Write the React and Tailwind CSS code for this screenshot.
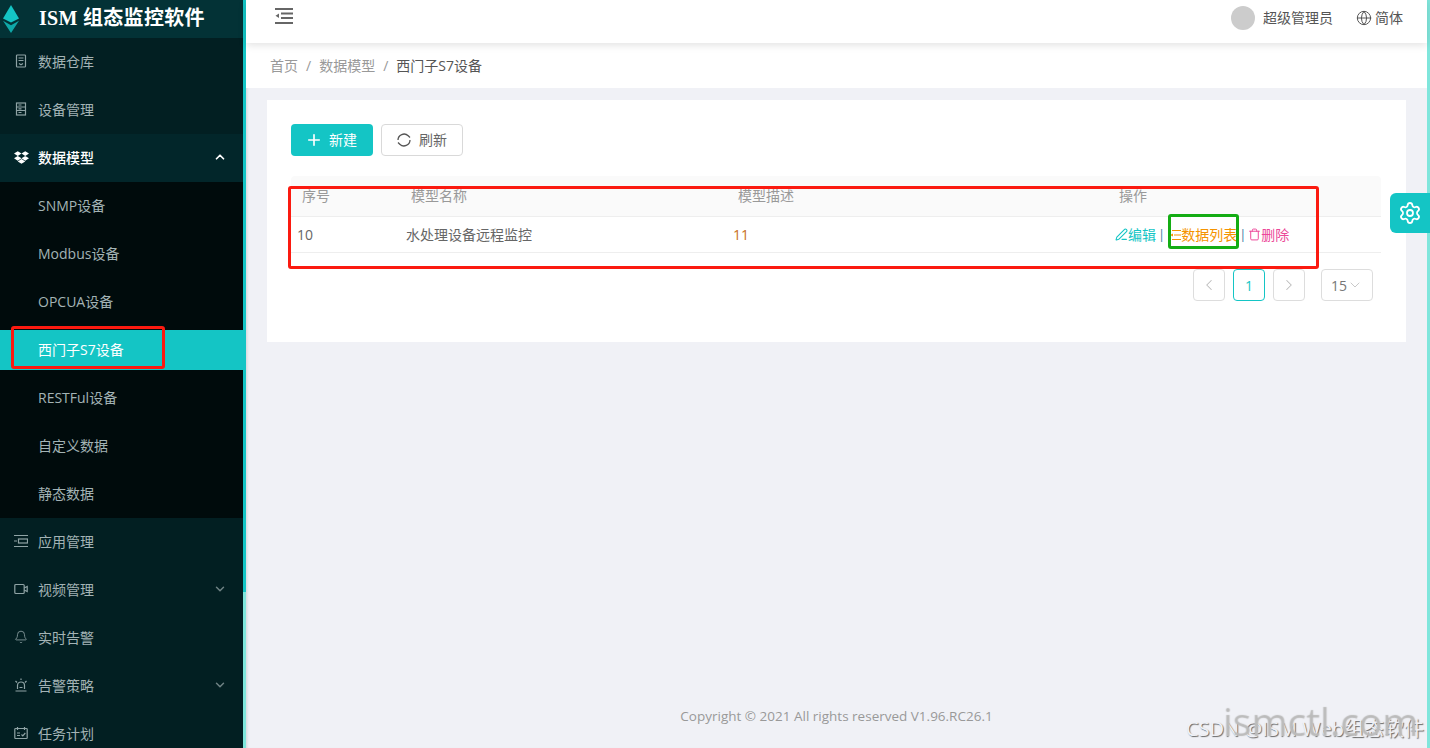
import { Plus, Settings, Globe, PenLine, Trash, ChevronUp, ChevronDown, ChevronLeft, ChevronRight, Bell } from 'lucide-react'
import { FaDropbox } from 'react-icons/fa'

const fontStack = '[font-family:"Open_Sans","Noto_Sans_CJK_SC",sans-serif]'

function IconBox({ children }) {
  return (
    <svg width="14" height="14" viewBox="0 0 14 14" fill="none" stroke="currentColor" strokeWidth="1.2">
      {children}
    </svg>
  )
}

const WarehouseIcon = () => (
  <IconBox>
    <rect x="2.5" y="1" width="9" height="12" rx="0.8" />
    <path d="M4.5 4h5M4.5 6.5h5M5 9.5l2 1.2 2-1.2" />
  </IconBox>
)
const DeviceIcon = () => (
  <IconBox>
    <rect x="2.5" y="1" width="9" height="12" />
    <path d="M2.5 5h9M2.5 8.5h9M4.5 3h3M4.5 6.8h3M4.5 10.5h3" />
  </IconBox>
)
const AppIcon = () => (
  <IconBox>
    <path d="M0 1.500h14M0 12.500h14M0 7h3" />
    <rect x="4.500" y="5" width="9" height="4" />
  </IconBox>
)
const VideoIcon = () => (
  <IconBox>
    <rect x="0.8" y="2.5" width="9.4" height="9" rx="1" />
    <path d="M10.2 6l3-1.5v5l-3-1.5" />
  </IconBox>
)
const AlarmIcon = () => (
  <IconBox>
    <path d="M3.5 11V7.5a3.5 3.5 0 0 1 7 0V11M1.5 13h11M1.5 3l1.5 1.5M12.5 3L11 4.500M7 0.500v1.500M5.500 9.500h3" />
  </IconBox>
)
const PlanIcon = () => (
  <IconBox>
    <rect x="0.8" y="2.5" width="12.4" height="10" rx="0.8" />
    <path d="M3.500 1v3M10.500 1v3M3 7h3M3 9.500h3M7.500 8.500l1.300 1.300 2.500-2.800" />
  </IconBox>
)
const bellIcon = <Bell size={14} strokeWidth={1.4} />

const topItems = [
  { label: '数据仓库', icon: <WarehouseIcon /> },
  { label: '设备管理', icon: <DeviceIcon /> },
]
const subItems = ['SNMP设备', 'Modbus设备', 'OPCUA设备', '西门子S7设备', 'RESTFul设备', '自定义数据', '静态数据']
const bottomItems = [
  { label: '应用管理', icon: <AppIcon /> },
  { label: '视频管理', icon: <VideoIcon />, arrow: true },
  { label: '实时告警', icon: bellIcon },
  { label: '告警策略', icon: <AlarmIcon />, arrow: true },
  { label: '任务计划', icon: <PlanIcon /> },
]

function MenuItem({ item }) {
  return (
    <div className="flex h-12 shrink-0 items-center pb-[2px] pl-[14px] pr-[16px] text-[14px] text-[#a3b3b5]">
      <span className="flex w-6 text-[#8fa3a5]">{item.icon}</span>
      <span className="flex-1">{item.label}</span>
      {item.arrow && <ChevronDown size={14} strokeWidth={2.5} className="text-[#6f8385]" />}
    </div>
  )
}

function Sidebar() {
  return (
    <aside className="flex h-full w-[243px] shrink-0 flex-col overflow-hidden bg-[#021f22]">
      <div className="flex h-[38px] shrink-0 items-center bg-[#033236] pl-[3px]">
        <svg width="16" height="28" viewBox="0 0 17 32" preserveAspectRatio="none">
          <polygon points="8.500,0 0,15.500 8.500,20 17,15.500" fill="#14c5c5" />
          <polygon points="0,18 8.500,23 17,18 8.500,32" fill="#0fa8a8" />
        </svg>
        <span className="mb-[2px] ml-[20px] text-[20px] font-bold tracking-[0.3px] text-white [font-family:'Liberation_Serif','Noto_Sans_CJK_SC',serif]">
          ISM 组态监控软件
        </span>
      </div>
      {topItems.map((item) => (
        <MenuItem key={item.label} item={item} />
      ))}
      <div className="flex h-12 shrink-0 items-center bg-[#02262a] pb-[2px] pl-[14px] pr-[16px] text-[14px] font-medium text-white">
        <FaDropbox size={15} className="mr-[9px]" />
        <span className="flex-1">数据模型</span>
        <ChevronUp size={14} strokeWidth={3} />
      </div>
      <div className="flex h-[336px] shrink-0 flex-col gap-2 bg-[#000b0c] pt-1">
        {subItems.map((name) => (
          <div
            key={name}
            className={`flex h-10 shrink-0 items-center pb-[2px] pl-[38px] text-[14px] ${name === '西门子S7设备' ? 'bg-[#14c5c5] text-white' : 'text-[#a3b3b5]'}`}
          >
            {name}
          </div>
        ))}
      </div>
      {bottomItems.map((item) => (
        <MenuItem key={item.label} item={item} />
      ))}
    </aside>
  )
}

function Scrollbar() {
  return (
    <div className="flex h-full w-[3px] shrink-0 flex-col bg-[#80e6dc]">
      <div className="h-[592px] bg-[#14c5c5]" />
    </div>
  )
}

function RightEdge() {
  return <div className="h-full w-[3px] shrink-0 bg-[#80e6dc]" />
}

function TopBar() {
  return (
    <header className="relative z-10 flex h-[43px] shrink-0 items-center justify-between bg-white pb-[7px] pl-[29px] pr-[24px] shadow-[0_2px_8px_rgba(0,0,0,0.12)]">
      <svg width="18" height="16" viewBox="0 0 18 16" fill="none" stroke="#666" strokeWidth="1.800" className="mb-[4px]">
        <path d="M0 1h18M6 5.500h12M6 10h12M0 15h18" />
        <polygon points="0.500,7.800 4,5.500 4,10" fill="#666" stroke="none" />
      </svg>
      <div className="flex items-center text-[14px] text-[#555]">
        <span className="h-6 w-6 rounded-full bg-[#cccccc]" />
        <span className="mb-[2px] ml-2">超级管理员</span>
        <Globe size={16} strokeWidth={1.500} className="ml-[23px]" />
        <span className="mb-[2px] ml-[3px]">简体</span>
      </div>
    </header>
  )
}

function Breadcrumb() {
  return (
    <div className="flex h-[45px] shrink-0 items-center bg-white pl-[24px] text-[14px] text-[#999]">
      <span>首页</span>
      <span className="mx-2">/</span>
      <span>数据模型</span>
      <span className="mx-2">/</span>
      <span className="text-[#555]">西门子S7设备</span>
    </div>
  )
}

function Toolbar() {
  return (
    <div className="flex gap-2">
      <button className="flex h-8 w-[82px] items-center justify-center rounded-[4px] bg-[#14c5c5] pb-[2px] text-[14px] text-white">
        <Plus size={18} strokeWidth={2.200} className="ml-[-2px] mr-[6px] mt-[2px]" />
        新建
      </button>
      <button className="flex h-8 w-[82px] items-center justify-center rounded-[4px] border border-[#d9d9d9] bg-white pb-[2px] text-[14px] text-[#666]">
        <svg width="14" height="14" viewBox="0 0 14 14" fill="none" stroke="#555" strokeWidth="1.300" className="mr-[8px] mt-[2px]">
          <path d="M1 7a6 6 0 0 1 10.200-4.200L13 4.500M13 7a6 6 0 0 1-10.200 4.200L1 9.500" />
        </svg>
        刷新
      </button>
    </div>
  )
}

function ModelTable() {
  return (
    <div className="mt-5 text-[14px]">
      <div className="flex h-[41px] items-center rounded-t-[4px] border-b border-[#eeeeee] bg-[#fafafa] pb-[1px] text-[#999]">
        <span className="w-[120px] pl-[11px]">序号</span>
        <span className="w-[327px]">模型名称</span>
        <span className="w-[381px]">模型描述</span>
        <span>操作</span>
      </div>
      <div className="flex h-9 items-center border-b border-[#eeeeee] text-[#666]">
        <span className="w-[115px] pl-[6px]">10</span>
        <span className="w-[327px]">水处理设备远程监控</span>
        <span className="w-[382px] text-[#c8701e]">11</span>
        <span className="flex items-center text-[#14c5c5]">
          <PenLine size={13} strokeWidth={2} />
          编辑
          <span className="ml-[2px] mr-[5px] text-[13px] text-[#3a7ca5]">|</span>
          <span className="flex items-center text-[#f59300]">
            <svg width="11" height="12" viewBox="0 0 11 12" fill="none" stroke="currentColor" strokeWidth="1.200">
              <path d="M2 1.500h9M4 6h7M2 10.500h9" />
              <polygon points="0,6 3,4.500 3,7.500" fill="currentColor" stroke="none" />
            </svg>
            数据列表
          </span>
          <span className="ml-[2px] mr-[2px] text-[13px] text-[#3a7ca5]">|</span>
          <span className="flex items-center text-[#ec4899]">
            <Trash size={13} strokeWidth={1.800} />
            删除
          </span>
        </span>
      </div>
    </div>
  )
}

function Pagination() {
  const box = 'flex h-8 w-8 items-center justify-center rounded-[4px] border bg-white'
  return (
    <div className="mt-4 flex justify-end pr-2 text-[14px]">
      <div className={`${box} border-[#dddddd] text-[#bbbbbb]`}>
        <ChevronLeft size={18} strokeWidth={1.400} />
      </div>
      <div className={`${box} ml-2 border-[#14c5c5] text-[#14c5c5]`}>1</div>
      <div className={`${box} ml-2 border-[#dddddd] text-[#bbbbbb]`}>
        <ChevronRight size={18} strokeWidth={1.400} />
      </div>
      <div className="ml-4 flex h-8 w-[52px] items-center justify-center rounded-[4px] border border-[#dddddd] text-[#777]">
        15
        <ChevronDown size={16} strokeWidth={1.200} className="text-[#bbbbbb]" />
      </div>
    </div>
  )
}

export default function App() {
  return (
    <div className={`relative flex h-[748px] w-[1430px] overflow-hidden bg-[#f0f1f6] ${fontStack}`}>
      <Sidebar />
      <Scrollbar />
      <main className="flex min-w-0 flex-1 flex-col shadow-[inset_3px_0_3px_-2px_rgba(0,0,0,0.12)]">
        <TopBar />
        <Breadcrumb />
        <div className="px-[21px] pt-3">
          <section className="h-[242px] bg-white pl-6 pr-[25px] pt-6">
            <Toolbar />
            <ModelTable />
            <Pagination />
          </section>
        </div>
        <footer className="mt-auto pb-[22px] text-center text-[13.500px] text-[#999]">
          Copyright © 2021 All rights reserved V1.96.RC26.1
        </footer>
      </main>
      <RightEdge />

      {/* floating settings tab */}
      <div className="absolute left-[1390px] top-[193px] flex h-10 w-10 items-center justify-center rounded-l-[6px] bg-[#14c5c5] text-white">
        <Settings size={24} strokeWidth={1.800} />
      </div>

      {/* red and green annotations drawn over the screenshot */}
      <div className="absolute left-[11px] top-[326px] h-[43px] w-[154px] rounded-[3px] border-[3px] border-[#fb1a10]" />
      <div className="absolute left-[288px] top-[186px] h-[83px] w-[1031px] rounded-[3px] border-[3px] border-[#fb1a10]" />
      <div className="absolute left-[1168px] top-[214px] h-[35px] w-[71px] rounded-[3px] border-[3px] border-[#14ad14]" />

      {/* watermark */}
      <div className="absolute left-[1186px] top-[718px] whitespace-nowrap text-[20px] leading-[22px] text-[#f0f1f6] [text-shadow:1px_1px_1px_#666]">
        CSDN @ISM Web组态软件
      </div>
      <div className="absolute left-[1222px] top-[700px] whitespace-nowrap text-[39px] leading-none text-transparent [text-shadow:1px_1px_1px_#bbb]">
        ismctl.com
      </div>
    </div>
  )
}
